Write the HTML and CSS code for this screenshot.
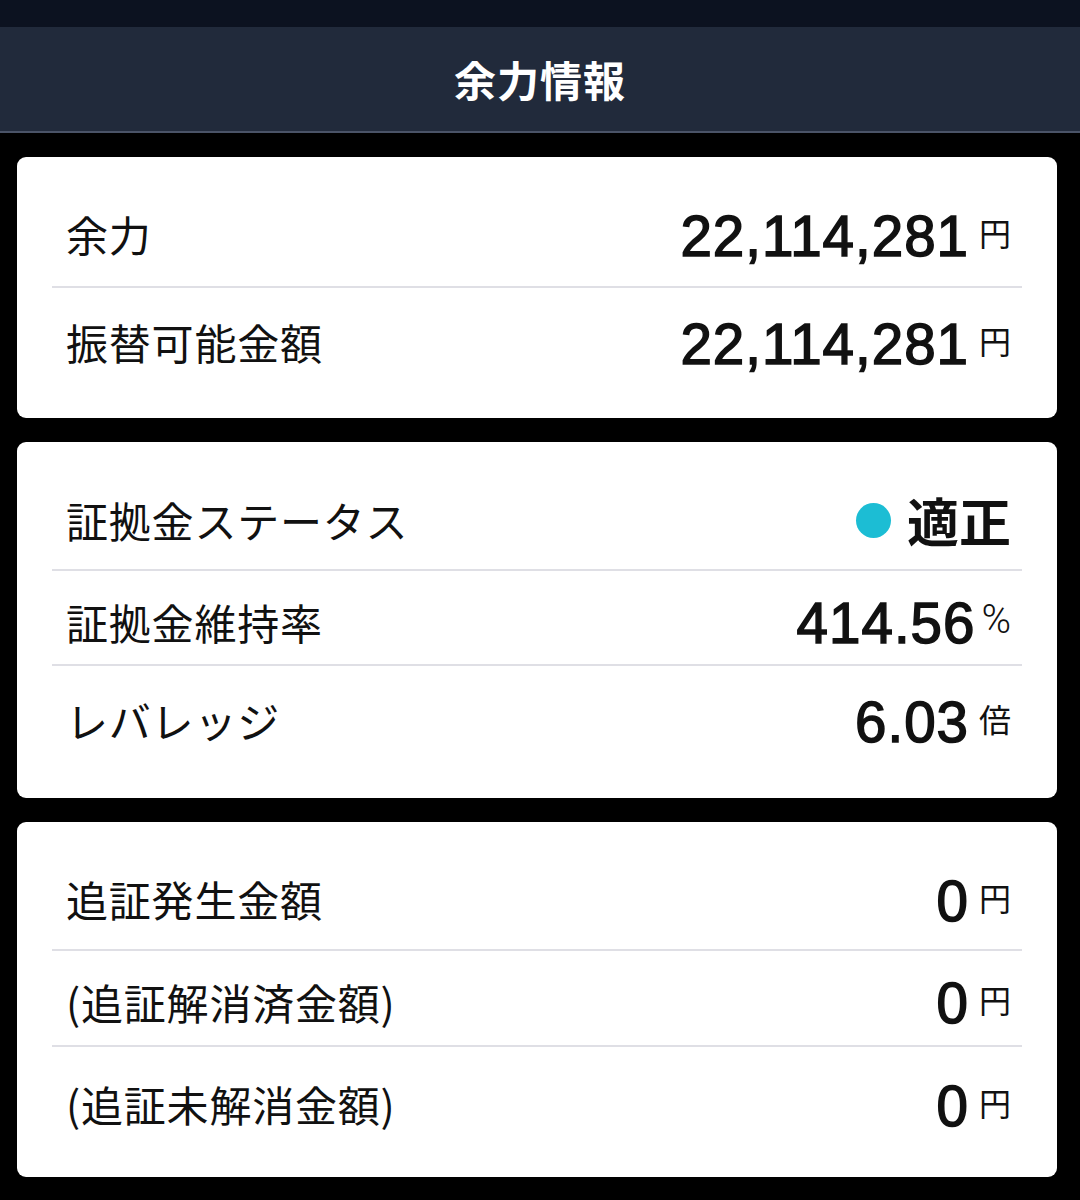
FILE: index.html
```html
<!DOCTYPE html>
<html lang="ja">
<head>
<meta charset="utf-8">
<title>余力情報</title>
<link rel="stylesheet" href="styles.css">
</head>
<body>
<div class="statusbar"></div>
<header class="navbar"><h1 class="nav-title">余力情報</h1></header>
<main class="content">
  <section class="card card-funds">
    <div class="row">
      <span class="label">余力</span>
      <span class="value"><span class="num">22,114,281</span><span class="unit">円</span></span>
    </div>
    <div class="row">
      <span class="label">振替可能金額</span>
      <span class="value"><span class="num">22,114,281</span><span class="unit">円</span></span>
    </div>
  </section>
  <section class="card card-status">
    <div class="row">
      <span class="label">証拠金ステータス</span>
      <span class="status"><span class="dot"></span><span class="status-text">適正</span></span>
    </div>
    <div class="row">
      <span class="label">証拠金維持率</span>
      <span class="value"><span class="num">414.56</span><span class="unit unit-pct">%</span></span>
    </div>
    <div class="row">
      <span class="label">レバレッジ</span>
      <span class="value"><span class="num">6.03</span><span class="unit">倍</span></span>
    </div>
  </section>
  <section class="card card-margin">
    <div class="row">
      <span class="label">追証発生金額</span>
      <span class="value"><span class="num">0</span><span class="unit">円</span></span>
    </div>
    <div class="row">
      <span class="label">(追証解消済金額)</span>
      <span class="value"><span class="num">0</span><span class="unit">円</span></span>
    </div>
    <div class="row">
      <span class="label">(追証未解消金額)</span>
      <span class="value"><span class="num">0</span><span class="unit">円</span></span>
    </div>
  </section>
</main>
</body>
</html>
```
FILE: styles.css
```css
html, body {
  margin: 0;
  padding: 0;
  background: #000;
}
body {
  width: 1080px;
  height: 1200px;
  overflow: hidden;
  font-family: "Noto Sans CJK JP", "Noto Sans", sans-serif;
  color: #111;
}
.statusbar {
  height: 27px;
  background: #0c1220;
}
.navbar {
  height: 104px;
  background: #212a3b;
  border-bottom: 2px solid #4a5367;
  display: flex;
  align-items: center;
  justify-content: center;
}
.nav-title {
  margin: 0;
  color: #fff;
  font-size: 42px;
  font-weight: 700;
  line-height: 1;
  letter-spacing: 1px;
}
.content {
  padding: 24px 23px 0 17px;
  display: flex;
  flex-direction: column;
  gap: 24px;
}
.card {
  background: #fff;
  border-radius: 9px;
  padding: 0 35px;
  display: flex;
  flex-direction: column;
}
.row {
  display: flex;
  align-items: center;
  justify-content: space-between;
  padding: 0 11px 0 14px;
  border-bottom: 2px solid #dfdfe5;
  box-sizing: border-box;
}
.row:last-child {
  border-bottom: none;
}

/* card 1 : 余力 */
.card-funds {
  padding-top: 25px;
  padding-bottom: 22px;
}
.card-funds .row:nth-child(1) { height: 106px; }
.card-funds .row:nth-child(2) { height: 108px; }

/* card 2 : 証拠金ステータス */
.card-status {
  padding-top: 29px;
  padding-bottom: 24px;
}
.card-status .row:nth-child(1) { height: 100px; }
.card-status .row:nth-child(2) { height: 95px; padding-top: 8px; }
.card-status .row:nth-child(3) { height: 108px; }

/* card 3 : 追証 */
.card-margin {
  padding-top: 27px;
  padding-bottom: 16px;
}
.card-margin .row:nth-child(1) { height: 102px; }
.card-margin .row:nth-child(2) { height: 96px; padding-top: 7px; }
.card-margin .row:nth-child(3) { height: 114px; }

.label {
  font-size: 42px;
  line-height: 1;
  letter-spacing: 0.8px;
  font-weight: 400;
  color: #111;
}
.value {
  display: flex;
  align-items: flex-start;
  margin-top: 5px;
}
.num {
  font-family: "Liberation Sans", Arial, sans-serif;
  font-weight: 400;
  font-size: 56.5px;
  line-height: 56px;
  letter-spacing: 1px;
  color: #111;
  -webkit-text-stroke: 1.5px #111;
}
.unit {
  font-size: 32px;
  line-height: 32px;
  margin-top: 7px;
  margin-left: 10px;
  color: #111;
}
.unit-pct {
  font-family: Roboto, "Liberation Sans", sans-serif;
  font-weight: 300;
  font-size: 40px;
  line-height: 40px;
  margin-top: 4px;
  margin-left: 6px;
}
.status {
  display: flex;
  align-items: center;
}
.dot {
  width: 35px;
  height: 35px;
  border-radius: 50%;
  background: #1cbdd4;
  margin-right: 16px;
}
.status-text {
  font-size: 52px;
  line-height: 1;
  font-weight: 700;
  color: #111;
}
```
